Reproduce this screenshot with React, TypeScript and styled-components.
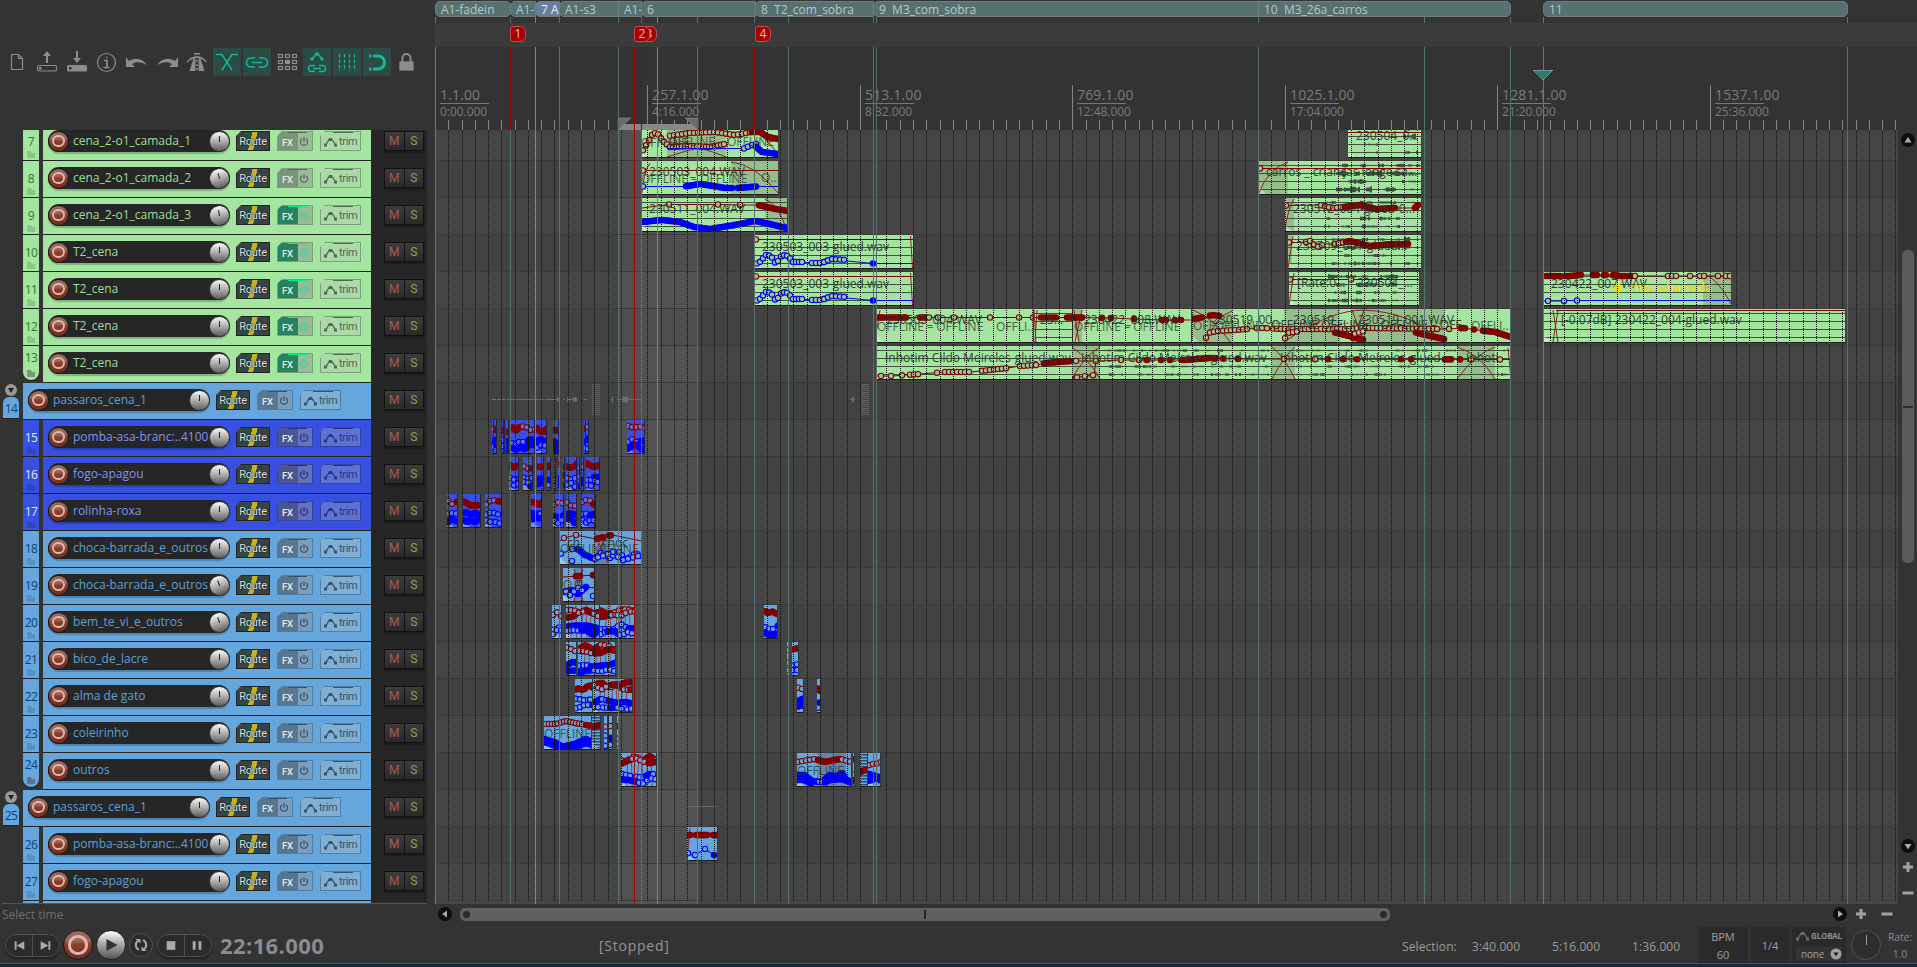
import React from 'react';
import styled, { createGlobalStyle } from 'styled-components';

const Global = createGlobalStyle`
  * { box-sizing: border-box; }
  html, body { margin: 0; padding: 0; background: #333; overflow: hidden; }
  body { font-family: "Open Sans", "Noto Sans", sans-serif; color: #999; }
  svg { display: block; }
`;

/* ---------- geometry ---------- */
const ORIGIN = 435;
const BEAT = 13.277;
const VIEW_W = 1463;
const ROW_H = 37;

/* ---------- palette ---------- */
type Tone = 'green' | 'sky' | 'blue';
const TONES: Record<Tone, { bg: string; name: string; num: string; fx: string; pw: string; trim: string; edge: string; ink: string; folder: string; fade: string; bead: string }> = {
  green: { bg: '#a4e5a0', name: '#9fdd9c', num: '#2f7a35', fx: '#7b957a', pw: '#9abb98', trim: '#abd9a9', edge: '#7aa37a', ink: '#4f6b50', folder: '#8cc489', fade: '#94bf8a', bead: '#a0c39b' },
  sky: { bg: '#65a7dc', name: '#5da0d6', num: '#103f74', fx: '#597690', pw: '#7b9ebc', trim: '#7fafd3', edge: '#4f7fa8', ink: '#35536f', folder: '#5590c0', fade: '#6385ab', bead: '#73a0cc' },
  blue: { bg: '#3750df', name: '#8095ef', num: '#e4e8ff', fx: '#4b5690', pw: '#6572bb', trim: '#5d73d4', edge: '#3443a4', ink: '#28348a', folder: '#2f44c4', fade: '#3d4b9e', bead: '#5a74e6' },
};

/* ---------- page frame ---------- */
const Screen = styled.div`
  width: 1917px; height: 967px; display: flex; flex-direction: column;
  background: #333; overflow: hidden;
`;
const Main = styled.div`display: flex; height: 904px;`;
const Side = styled.div`width: 435px; flex: none; display: flex; flex-direction: column;`;
const Timeline = styled.div`flex: 1; display: flex; flex-direction: column; position: relative;`;

/* ---------- toolbar ---------- */
const Toolbar = styled.div`height: 130px; padding: 48px 0 0 3px; display: flex; gap: 2px;`;
const Tool = styled.div<{ $on?: boolean }>`
  width: 28px; height: 28px;
  background: ${p => (p.$on ? '#2c4b45' : 'transparent')};
  color: ${p => (p.$on ? '#14b89a' : '#8a8e8d')};
  svg { width: 28px; height: 28px; }
`;

/* ---------- track panel ---------- */
const TrackList = styled.div`
  height: 773px; width: 427px; overflow: hidden; display: flex; flex-direction: column;
  background: linear-gradient(90deg, #333 371px, #262626 371px);
`;
const PanelEdge = styled.div`height: 1px; width: 425px; margin-left: 2px; background: #555;`;
const TrackRow = styled.div<{ $first?: boolean }>`
  height: ${ROW_H}px; flex: none; display: flex; margin-top: ${p => (p.$first ? '-6px' : '0')};
`;
const FolderCol = styled.div`width: 23px; flex: none; display: flex; flex-direction: column; align-items: center; padding-right: 1px; padding-top: 1px;`;
const FolderTab = styled.div`
  width: 16px; height: 22px; margin-top: 1px; background: #65a7dc; border-radius: 6px 6px 0 0;
  color: #103f74; font-size: 12px; line-height: 23px; text-align: center; border-bottom: 1px solid #222;
  letter-spacing: -0.6px;
`;
const NumCol = styled.div<{ $t: Tone; $last?: boolean }>`
  width: 16px; height: ${p => (p.$last ? 34 : 36)}px; flex: none; margin-right: 4px; background: ${p => TONES[p.$t].bg};
  color: ${p => TONES[p.$t].num}; display: flex; flex-direction: column; align-items: center;
  font-size: 12px; line-height: 16px; padding-top: ${p => (p.$last ? 4 : 10)}px; letter-spacing: -0.6px;
  border-radius: ${p => (p.$last ? '0 0 8px 8px' : '0')}; box-shadow: 0 1px 0 #222;
  svg { margin-top: ${p => (p.$last ? 4 : 1)}px; }
`;
const Body = styled.div<{ $t: Tone; $wide?: boolean }>`
  width: ${p => (p.$wide ? 348 : 328)}px; height: 36px; flex: none; background: ${p => TONES[p.$t].bg};
  box-shadow: 0 1px 0 #222; display: flex; align-items: center; padding: 0 0 2px 5px;
`;
const Pill = styled.div`
  width: 182px; height: 22px; border-radius: 11px; background: #262626; display: flex; align-items: center;
  box-shadow: 0 2px 1px rgba(0,0,0,.22);
`;
const Arm = styled.div<{ $d?: number }>`
  width: ${p => p.$d || 21}px; height: ${p => p.$d || 21}px; flex: none; border-radius: 50%; display: flex; align-items: center; justify-content: center;
  background: linear-gradient(#9c6658 0 35%, #8c3c29 50%, #6e2e20); border: 1px solid #171717;
  &::after { content: ''; width: 47%; height: 47%; border: ${p => (p.$d ? 3 : 2)}px solid #dcb9b0; border-radius: 50%; }
`;
const Name = styled.div<{ $t: Tone }>`
  width: 140px; padding-left: 4px; color: ${p => TONES[p.$t].name}; font-size: 12px; letter-spacing: 0;
  white-space: nowrap; overflow: hidden; line-height: 20px;
`;
const Knob = styled.div<{ $a: number }>`
  width: 21px; height: 21px; border-radius: 50%; flex: none; background: linear-gradient(#fafafa, #b5b5b5 45%, #5c5c5c);
  border: 1px solid #333; display: flex; justify-content: center; transform: rotate(${p => p.$a}deg);
  &::after { content: ''; width: 1px; height: 6px; margin-top: 4px; background: #222; }
`;
const RouteBtn = styled.div`
  width: 34px; height: 20px; margin-left: 6px; color: #ddd; font: 11px/20px Roboto, sans-serif; text-align: center; letter-spacing: -.2px;
  clip-path: polygon(5px 0, 100% 0, 100% 100%, 0 100%, 0 5px); border: 1px solid #222; white-space: nowrap;
  background: linear-gradient(104deg, #3b4240 26%, #235048 27% 38%, #3b4240 39% 42%, #c8b21e 43% 56%, #3b4240 57% 60%, #2c4358 61% 72%, #3b4240 73%);
  text-shadow: 0 0 2px #222, 0 0 1px #222;
`;
const FxBtn = styled.div<{ $t: Tone; $on?: boolean }>`
  width: 36px; height: 20px; margin-left: 7px; display: flex; clip-path: polygon(5px 0, 100% 0, 100% 100%, 0 100%, 0 5px);
  background: linear-gradient(90deg, ${p => (p.$on ? '#25845f' : TONES[p.$t].fx)} 20px, ${p => TONES[p.$t].pw} 20px);
  border: 1px solid ${p => TONES[p.$t].edge}; color: #e6eae6; font: 500 9.5px/21px Roboto, sans-serif; position: relative;
  span { width: 19px; flex: none; text-align: center; }
  svg { margin: 4px 0 0 1px; flex: none; }
  &::before { content: ''; position: absolute; left: 10px; top: 0; width: 19px; height: 1px; background: ${p => (p.$on ? '#00f090' : TONES[p.$t].ink)}; }
`;
const TrimBtn = styled.div<{ $t: Tone }>`
  width: 41px; height: 20px; margin-left: 7px; display: flex; align-items: center; clip-path: polygon(5px 0, 100% 0, 100% 100%, 0 100%, 0 5px);
  background: ${p => TONES[p.$t].trim}; border: 1px solid ${p => TONES[p.$t].edge}; color: ${p => TONES[p.$t].ink};
  font: 11px/20px Roboto, sans-serif; letter-spacing: -.35px; position: relative; padding: 1px 0 0 3px; gap: 2px;
  svg { flex: none; }
  &::before { content: ''; position: absolute; left: 12px; top: 0; width: 20px; height: 1px; background: ${p => TONES[p.$t].ink}; }
`;
const MuteSolo = styled.div`
  width: 40px; height: 20px; margin: 7px 0 0 13px; display: flex; background: linear-gradient(#3c3c3c, #2a2a2a);
  border: 1px solid #111; box-shadow: 0 2px 1px #1b1b1b; font: 12px/18px Roboto, sans-serif;
  span { flex: 1; text-align: center; }
  span:first-child { color: #a85a54; border-right: 1px solid #111; }
  span:last-child { color: #9b9b52; }
`;

const Power = ({ c }: { c: string }) => (
  <svg width="12" height="12" viewBox="0 0 12 12" fill="none" stroke={c} strokeWidth="1.2"><path d="M4 2.8a3.6 3.6 0 1 0 4 0M6 1v5" /></svg>
);
const EnvIcon = ({ c }: { c: string }) => (
  <svg width="13" height="10" viewBox="0 0 13 10" fill={c} stroke={c}><path d="M2 8 L5 2.500 8 2.500 11 7" fill="none" strokeWidth="1.3" /><path d="M0 6.500h3v3H0zM5 1h3v3H5zM10 6.500h3v3h-3z" stroke="none" /></svg>
);
const Folder = ({ c }: { c: string }) => (
  <svg width="8" height="7" viewBox="0 0 8 7" fill={c}><path d="M0 0h4l1 2h3v5H0z" /></svg>
);

type Track = { n: number; name: string; tone: Tone; on?: boolean; parent?: boolean; last?: boolean; knob?: number };
const TRACKS: Track[] = [
  { n: 7, name: 'cena_2-o1_camada_1', tone: 'green' },
  { n: 8, name: 'cena_2-o1_camada_2', tone: 'green', knob: -16 },
  { n: 9, name: 'cena_2-o1_camada_3', tone: 'green', on: true, knob: -12 },
  { n: 10, name: 'T2_cena', tone: 'green', on: true },
  { n: 11, name: 'T2_cena', tone: 'green', on: true },
  { n: 12, name: 'T2_cena', tone: 'green', on: true },
  { n: 13, name: 'T2_cena', tone: 'green', on: true, last: true },
  { n: 14, name: 'passaros_cena_1', tone: 'sky', parent: true },
  { n: 15, name: 'pomba-asa-branc:..4100', tone: 'blue' },
  { n: 16, name: 'fogo-apagou', tone: 'blue' },
  { n: 17, name: 'rolinha-roxa', tone: 'blue' },
  { n: 18, name: 'choca-barrada_e_outros', tone: 'sky' },
  { n: 19, name: 'choca-barrada_e_outros', tone: 'sky', knob: -20 },
  { n: 20, name: 'bem_te_vi_e_outros', tone: 'sky', knob: -20 },
  { n: 21, name: 'bico_de_lacre', tone: 'sky' },
  { n: 22, name: 'alma de gato', tone: 'sky' },
  { n: 23, name: 'coleirinho', tone: 'sky' },
  { n: 24, name: 'outros', tone: 'sky', last: true },
  { n: 25, name: 'passaros_cena_1', tone: 'sky', parent: true },
  { n: 26, name: 'pomba-asa-branc:..4100', tone: 'sky' },
  { n: 27, name: 'fogo-apagou', tone: 'sky' },
];

function TrackPanel({ t, first }: { t: Track; first: boolean }) {
  const c = TONES[t.tone];
  return (
    <TrackRow $first={first}>
      <FolderCol>
        {t.parent && (
          <>
            <svg width="12" height="12" viewBox="0 0 12 12"><circle cx="6" cy="6" r="6" fill="#999" /><path d="M3 4h6L6 9z" fill="#222" /></svg>
            <FolderTab>{t.n}</FolderTab>
          </>
        )}
      </FolderCol>
      {!t.parent && <NumCol $t={t.tone} $last={t.last}>{t.n}<Folder c={t.last ? c.fx : c.folder} /></NumCol>}
      <Body $t={t.tone} $wide={t.parent}>
        <Pill><Arm /><Name $t={t.tone}>{t.name}</Name><Knob $a={t.knob || 0} /></Pill>
        <RouteBtn>Route</RouteBtn>
        <FxBtn $t={t.tone} $on={t.on}><span>FX</span><Power c={t.on ? '#35d59a' : c.ink} /></FxBtn>
        <TrimBtn $t={t.tone}><EnvIcon c={c.ink} />trim</TrimBtn>
      </Body>
      <MuteSolo><span>M</span><span>S</span></MuteSolo>
    </TrackRow>
  );
}

/* ---------- ruler ---------- */
const RegionLane = styled.div`height: 23px; position: relative;`;
const Region = styled.div<{ $blue?: boolean; $l?: boolean; $r?: boolean }>`
  position: absolute; top: 1px; height: 16px; background: ${p => (p.$blue ? '#66809e' : '#577070')};
  border: 1px solid #6f7d7d; border-radius: ${p => `${p.$l ? 5 : 0}px ${p.$r ? 5 : 0}px ${p.$r ? 5 : 0}px ${p.$l ? 5 : 0}px`};
  color: ${p => (p.$blue ? '#e6eef4' : '#b7c8c8')}; font-size: 12px; line-height: 16px; padding-left: 5px; letter-spacing: 0;
  white-space: pre; overflow: hidden;
`;
const MarkerLane = styled.div`height: 24px; position: relative; background: #3b3b3b; z-index: 2;`;
const Marker = styled.div`
  position: absolute; top: 3px; width: 16px; height: 16px; border-radius: 3px 6px 6px 3px; background: #a80000; border: 1px solid #c05050;
  color: #f0b8b8; font-size: 12px; line-height: 14px; text-align: center;
`;
const TimeLane = styled.div`height: 83px; position: relative;`;
const TimeLabel = styled.div`
  position: absolute; top: 38px; color: #7b7b7b; white-space: nowrap;
  b { display: block; font-weight: 400; font-size: 14px; line-height: 20px; height: 18px; letter-spacing: .15px; }
  i { display: block; font-style: normal; font-size: 12px; line-height: 16px; border-top: 1px solid #777; width: 49px; letter-spacing: -.05px; }
`;
const RulerTicks = styled.svg`position: absolute; left: 0; top: 0;`;

const REGIONS = [
  { x: 435, e: 511, t: 'A1-fadein', l: true, r: true },
  { x: 510, e: 536, t: 'A1-s2', l: true },
  { x: 535, e: 560, t: '7 A1', b: true, l: true },
  { x: 559, e: 619, t: 'A1-s3', l: true },
  { x: 618, e: 642, t: 'A1-s' },
  { x: 641, e: 756, t: '6', l: true },
  { x: 755, e: 874, t: '8  T2_com_sobra', l: true },
  { x: 873, e: 1259, t: '9  M3_com_sobra', l: true },
  { x: 1258, e: 1511, t: '10  M3_26a_carros', r: true },
  { x: 1543, e: 1848, t: '11', l: true, r: true },
];
const LABELS = [['1.1.00', '0:00.000'], ['257.1.00', '4:16.000'], ['513.1.00', '8:32.000'], ['769.1.00', '12:48.000'], ['1025.1.00', '17:04.000'], ['1281.1.00', '21:20.000'], ['1537.1.00', '25:36.000']];
const tick = (i: number) => Math.round(BEAT * i);

function Ruler() {
  return (
    <>
      <RegionLane>
        {REGIONS.map(r => (
          <Region key={r.x} $blue={r.b} $l={r.l} $r={r.r} style={{ left: r.x - ORIGIN, width: r.e - r.x }}>{r.t}</Region>
        ))}
      </RegionLane>
      <MarkerLane>
        {[[641, 3], [634, 2], [510, 1], [755, 4]].map(([x, n]) => <Marker key={n} style={{ left: x - ORIGIN }}>{n}</Marker>)}
      </MarkerLane>
      <TimeLane>
        <RulerTicks width="1482" height="83">
          {Array.from({ length: 110 }, (_, i) => i + 1).map(i => (
            <rect key={i} x={tick(i)} y={i % 16 ? 73 : 38} width="1" height={i % 16 ? 10 : 45} fill="#868686" />
          ))}
          <rect x="183" y="77" width="80" height="6" fill="#868a87" />
          <path d="M183 71h13l-13 12zM263 71h-13l13 12z" fill="#6c6c6c" stroke="#8a8a8a" strokeWidth=".6" />
        </RulerTicks>
        {LABELS.map(([a, b], i) => <TimeLabel key={a} style={{ left: tick(i * 16) + 5 }}><b>{a}</b><i>{b}</i></TimeLabel>)}
      </TimeLane>
    </>
  );
}

/* ---------- media items ---------- */
type P = [number, number];
type Run = [number, number, number, 0 | 1]; // from, to, step, filled
type Env = { c: 'r' | 'b'; pts: P[]; runs?: Run[]; noLine?: boolean };
type Item = {
  x: number; e: number; tone?: Tone; lines?: boolean; text?: [number, number, string][];
  env?: Env[]; fade?: [number, number][]; curves?: string[]; wave?: [number, number, number][]; auto?: number; hatch?: boolean;
};
const RED = '#820000';
const BLUE = '#0000fa';

const yAt = (pts: P[], x: number) => {
  for (let i = 1; i < pts.length; i++) {
    if (x <= pts[i][0]) {
      const [a, b] = [pts[i - 1], pts[i]];
      return a[1] + ((b[1] - a[1]) * (x - a[0])) / (b[0] - a[0] || 1);
    }
  }
  return pts[pts.length - 1][1];
};
const rnd = (s: number) => {
  const v = Math.sin(s * 127.1 + 311.7) * 43758.5453;
  return v - Math.floor(v);
};

const Clip = styled.div<{ $bg: string }>`
  position: absolute; top: 0; height: 34px; background: ${p => p.$bg}; overflow: hidden;
  border-bottom: 1px solid #1d1d1d; border-right: 1px solid rgba(20, 20, 20, .75);
`;

function Envelope({ env, bead }: { env: Env; bead: string }) {
  const col = env.c === 'r' ? RED : BLUE;
  const dots: React.ReactNode[] = [];
  (env.runs || []).forEach(([a, b, s, f], k) => {
    for (let x = a; x <= b; x += s) dots.push(<circle key={`${k}-${x}`} cx={x} cy={yAt(env.pts, x)} r={f ? 3.3 : 2.7} fill={f ? col : bead} stroke={col} strokeWidth={f ? 0 : 1.1} />);
  });
  return (
    <g>
      {!env.noLine && <polyline points={env.pts.map(p => p.join(',')).join(' ')} fill="none" stroke={col} strokeWidth="1" />}
      {dots}
    </g>
  );
}

/* Dense volume and pan envelopes of the short bird-song items. */
function autoEnv(it: Item): Env[] {
  const w = it.e - it.x;
  const seed = it.x + (it.auto || 0) * 3.7;
  const make = (c: 'r' | 'b', mid: number, amp: number, k: number): Env => {
    const pts: P[] = [];
    const step = Math.max(4, Math.min(9, w / 5));
    let i = 0;
    for (let x = it.x; x <= it.e + step; x += step) pts.push([x, mid + (rnd(seed + k + i++) - 0.5) * amp]);
    const runs: Run[] = [];
    let x = it.x + 1;
    while (x < it.e) {
      const len = 4 + rnd(seed + x + k) * 12;
      const filled = rnd(seed + x * 2 + k) > 0.42;
      runs.push([x, Math.min(x + len, it.e), filled ? 2 : 4, filled ? 1 : 0]);
      x += len + 2;
    }
    return { c, pts, runs };
  };
  if (it.tone === 'blue') return [make('r', 9, 7, 1), make('b', 21, 6, 20), make('b', 27, 7, 40)];
  const bands = [make('r', 9, 8, 1), make('b', 22, 6, 20), make('b', 28, 6, 40)];
  return w > 30 ? [make('r', 6, 7, 60), ...bands] : bands;
}

function ClipView({ it }: { it: Item }) {
  const tone = it.tone || 'green';
  const w = it.e - it.x;
  const c = TONES[tone];
  const envs = it.auto !== undefined ? autoEnv(it) : it.env || [];
  return (
    <Clip $bg={c.bg} style={{ left: it.x - ORIGIN, width: w }}>
      <svg width={w} height="33" viewBox={`${it.x} 0 ${w} 33`}>
        {(it.fade || []).map(([a, b]) => <rect key={a} x={a} y="0" width={b - a} height="33" fill={c.fade} />)}
        {it.lines && [4, 12, 20, 28].map(y => <rect key={y} x={it.x} y={y} width={w} height="1" fill="#3f5240" />)}
        {it.hatch && Array.from({ length: 11 }, (_, i) => <rect key={i} x={it.x} y={i * 3 + 1} width={w} height="1.500" fill="#284d70" />)}
        {(it.wave || []).map(([a, b, amp], k) => (
          <g key={k} fill="#3c4f3d">
            {[4.5, 12.5, 20.5, 28.5].map((y, j) => Array.from({ length: Math.floor((b - a) / 2) }, (_, i) => {
              const v = rnd(Math.floor(i / 3) + j * 91 + a);
              if (v < 0.35) return null;
              const h = (1 + rnd(i + j * 17 + a) * v * 3) * amp;
              return <rect key={`${j}-${i}`} x={a + i * 2} y={y - h} width="2" height={h * 2} />;
            }))}
          </g>
        ))}
        <path d={`M${it.x} 26v7h7z`} fill="#fff" opacity={w > 8 ? 0.35 : 0} />
        {(it.curves || []).map(d => <path key={d} d={d} fill="none" stroke="#8a2020" strokeWidth="1" />)}
        {it.auto !== undefined && w > 30 && [0.2, 0.5, 0.75].map(f => (
          <path key={f} d={`M${it.x + w * f} 2l-2 31M${it.x + w * f + 3} 0l1 33`} stroke="#8a2020" opacity=".7" />
        ))}
        {envs.map((e, i) => <Envelope key={i} env={e} bead={c.bead} />)}
        {(it.text || []).map(([x, y, s], i) => (
          <text key={i} x={x} y={y} fontSize="12" fill="#263a28" opacity={s.startsWith('O') ? 0.75 : 0.95} xmlSpace="preserve">{s}</text>
        ))}
      </svg>
    </Clip>
  );
}

const glued = (): Item => ({
  x: 755, e: 914, lines: true, text: [[762, 16, '230503_003-glued.wav']], curves: ['M910.500 1L912.500 33'],
  env: [
    { c: 'r', pts: [[755, 4.5], [914, 4.5]], runs: [[756, 756, 1, 0]] },
    { c: 'b', pts: [[755, 29], [759, 28], [766, 20], [771, 21], [776, 29], [782, 20], [788, 21], [793, 27], [802, 27], [812, 28], [822, 28], [831, 24], [846, 25], [847, 26], [873, 28.5], [914, 28.5]], runs: [[757, 802, 3, 0], [812, 824, 4, 0], [824, 846, 4, 0], [873, 873, 1, 1]] },
  ],
});

const small = (tone: Tone, list: number[][]): Item[] => list.map(([x, e], i) => ({ x, e, tone, auto: i }));

const LANES: Record<number, Item[]> = {
  7: [
    {
      x: 642, e: 779, fade: [[667, 726]], text: [[641, 23, 'OFFLINE'], [668, 22, 'OFFLINE'], [727, 22, 'OFFLINE']],
      curves: ['M667 33Q700 22 726 18', 'M667 18Q700 22 726 33', 'M757 8Q770 18 778 30'],
      env: [
        { c: 'r', pts: [[642, 28], [648, 18], [653, 9], [657, 9], [663, 17], [670, 23], [690, 22], [710, 23], [725, 20]], runs: [[643, 725, 3, 0]] },
        { c: 'r', pts: [[668, 12], [690, 9], [715, 8], [735, 11], [752, 8]], runs: [[670, 752, 4, 0]] },
        { c: 'r', pts: [[752, 8], [760, 8], [768, 13], [778, 15]], runs: [[752, 778, 2, 1]] },
        { c: 'b', pts: [[667, 24.5], [744, 24.5], [754, 20]], runs: [[744, 756, 4, 0]] },
        { c: 'b', pts: [[755, 22], [762, 28], [778, 30]], runs: [[756, 778, 2, 1]] },
      ],
    },
    { x: 1348, e: 1422, lines: true, text: [[1356, 16, '230504_0...']], env: [{ c: 'r', pts: [[1348, 8.5], [1422, 8.5]] }], wave: [[1364, 1380, .4], [1404, 1419, .8]] },
  ],
  8: [
    {
      x: 642, e: 779, fade: [[731, 779]], text: [[649, 15, '230503_004.WAV'], [641, 22, 'OFFLINE – OFFLINE'], [761, 21, 'O...']],
      curves: ['M731 1Q755 3 778 32', 'M642 32Q644 10 650 2'],
      env: [
        { c: 'r', pts: [[642, 9.500], [779, 9.500]], runs: [[643, 643, 1, 0]] },
        { c: 'b', pts: [[642, 25.5], [685, 25.5], [700, 23], [713, 25], [725, 27], [737, 27], [757, 25.5], [779, 25.5]], runs: [[643, 643, 1, 0], [686, 732, 2, 1], [738, 756, 2, 1]] },
      ],
    },
    { x: 1259, e: 1422, lines: true, fade: [[1259, 1288]], curves: ['M1259 32Q1268 8 1288 1'], text: [[1266, 15, 'carros _ crianças longe sa...']], env: [{ c: 'r', pts: [[1259, 7.500], [1422, 7.500]], runs: [[1260, 1260, 1, 0]] }], wave: [[1336, 1404, .85], [1408, 1420, .4]] },
  ],
  9: [
    {
      x: 642, e: 788, lines: true, fade: [[765, 788]], text: [[649, 15, '230511_004.WAV']], curves: ['M765 1Q778 6 786 30'],
      env: [
        { c: 'r', pts: [[642, 10], [669, 6.5], [718, 6.5], [740, 7], [760, 7]], runs: [[669, 669, 1, 0], [718, 718, 1, 0], [740, 740, 1, 0]] },
        { c: 'r', pts: [[758, 7], [775, 11], [788, 13]], runs: [[759, 788, 2, 1]] },
        { c: 'b', pts: [[642, 24], [662, 22], [680, 24], [694, 29], [710, 31], [735, 27], [755, 23], [770, 26], [782, 29], [788, 30]], runs: [[642, 788, 2, 1]] },
      ],
    },
    {
      x: 1285, e: 1422, lines: true, text: [[1293, 15, '230512_004-glued-0...']], fade: [[1285, 1294]], curves: ['M1285 32Q1288 10 1294 1'],
      env: [{ c: 'r', pts: [[1285, 7.500], [1320, 7], [1332, 10], [1344, 9], [1360, 7], [1376, 11], [1395, 10], [1415, 10], [1418, 7]], runs: [[1286, 1286, 1, 0], [1321, 1342, 4, 0], [1345, 1396, 2, 1], [1415, 1418, 1, 1]] }],
      wave: [[1324, 1350, .4], [1360, 1400, .5], [1405, 1421, .3]],
    },
  ],
  10: [glued(), {
    x: 1288, e: 1422, lines: true, text: [[1296, 15, '230509_001-glued...']], fade: [[1288, 1292]], curves: ['M1288 33L1293 1'],
    env: [{ c: 'r', pts: [[1288, 7.500], [1305, 7.500], [1309, 5], [1317, 12], [1325, 9], [1336, 9], [1350, 6], [1370, 11], [1394, 9], [1410, 9]], runs: [[1289, 1289, 1, 0], [1306, 1324, 4, 0], [1335, 1344, 4, 0], [1346, 1394, 2, 1], [1399, 1410, 3, 1]] }],
    wave: [[1332, 1400, .5], [1404, 1411, .8]],
  }],
  11: [glued(), {
    x: 1289, e: 1349, lines: true, text: [[1297, 15, '[Rate:0...']], curves: ['M1289 33L1294 1'], env: [{ c: 'r', pts: [[1289, 7.500], [1349, 7.500]], runs: [[1290, 1290, 1, 0]] }], wave: [[1328, 1349, .6]],
  }, {
    x: 1349, e: 1420, lines: true, text: [[1357, 15, '230504_...']], env: [{ c: 'r', pts: [[1349, 7.500], [1420, 7.500]], runs: [[1351, 1351, 1, 0]] }], wave: [[1350, 1398, .6]],
  }, {
    x: 1544, e: 1732, lines: true, fade: [[1703, 1732]], text: [[1551, 16, '230422_007.WAV']], curves: ['M1703 2Q1718 6 1731 32'],
    env: [
      { c: 'r', pts: [[1544, 4], [1570, 4], [1580, 3], [1612, 3], [1620, 4], [1732, 4]], runs: [[1546, 1560, 2, 1], [1565, 1581, 2, 1], [1593, 1598, 2, 1], [1604, 1606, 1, 1], [1613, 1631, 2, 1], [1635, 1635, 1, 0], [1668, 1676, 4, 0], [1690, 1690, 1, 0], [1700, 1704, 4, 0], [1718, 1718, 1, 0], [1726, 1730, 4, 0]] },
      { c: 'b', pts: [[1544, 29], [1564, 29], [1566, 28.5], [1732, 28.5]], runs: [[1548, 1548, 1, 0], [1564, 1564, 1, 0], [1577, 1577, 1, 0]] },
    ],
  }],
  12: [{
    x: 877, e: 1034, text: [[886, 15, '230503_004.WAV'], [877, 22, 'OFFLINE – OFFLINE'], [996, 22, 'OFFLI...']],
    env: [{ c: 'r', pts: [[877, 8.500], [1034, 8.500]], runs: [[878, 885, 2, 1], [888, 906, 2, 1], [920, 926, 2, 1], [929, 929, 1, 0], [938, 938, 1, 0], [954, 954, 1, 0], [990, 990, 1, 0], [1019, 1019, 1, 0], [1033, 1033, 1, 0]] }],
    curves: ['M877 20L880 1'],
  }, {
    x: 1034, e: 1073, lines: true, text: [[1040, 15, '23...']], env: [{ c: 'r', pts: [[1034, 8.500], [1073, 8.500]], runs: [[1041, 1058, 3, 1], [1067, 1073, 2, 1]] }], curves: ['M1034 1L1036 33M1037 1L1035 33'],
  }, {
    x: 1073, e: 1192, fade: [[1073, 1082]], text: [[1084, 15, '230422_008.WAV'], [1074, 22, 'OFFLINE – OFFLINE']],
    env: [{ c: 'r', pts: [[1073, 8.500], [1111, 9], [1134, 10], [1163, 11], [1192, 11]], runs: [[1074, 1082, 2, 1], [1102, 1102, 1, 1], [1111, 1111, 1, 1], [1134, 1134, 1, 1], [1162, 1166, 2, 1], [1175, 1175, 1, 1], [1181, 1181, 1, 1]] }],
    curves: ['M1074 1L1079 33M1082 1L1075 33'],
  }, {
    x: 1192, e: 1511, fade: [[1192, 1232], [1284, 1340], [1352, 1444]],
    text: [[1212, 15, '230519_00...'], [1293, 15, '230519_...'], [1358, 15, '230519_001.WAV'], [1193, 21, 'OFFOFFLINE'], [1262, 20, '– OFFLINE OFFLINE – OFFLINE – OFF'], [1471, 21, 'OFFLI...']],
    curves: ['M1193 1Q1215 10 1230 33', 'M1206 33Q1215 8 1232 2', 'M1284 33Q1330 1 1364 1Q1410 3 1444 32', 'M1352 1L1364 33M1364 1L1352 33'],
    env: [
      { c: 'r', pts: [[1192, 10], [1206, 8], [1212, 6], [1220, 7]], runs: [[1193, 1204, 3, 1], [1210, 1220, 3, 1]] },
      { c: 'r', pts: [[1205, 31], [1208, 24], [1217, 22], [1235, 21], [1260, 19], [1284, 20], [1350, 20], [1364, 19], [1440, 20], [1449, 20], [1463, 19], [1477, 21], [1495, 23], [1511, 28]], runs: [[1206, 1218, 4, 0], [1223, 1248, 4, 0], [1257, 1268, 5, 0], [1273, 1440, 4, 0], [1449, 1449, 1, 0], [1461, 1466, 2, 1], [1474, 1474, 1, 1], [1483, 1511, 2, 1]] },
      { c: 'r', pts: [[1333, 23], [1345, 26], [1364, 31]], runs: [[1335, 1364, 2, 1]], noLine: true },
      { c: 'r', pts: [[1414, 23], [1430, 27], [1444, 30]], runs: [[1416, 1444, 2, 1]], noLine: true },
      { c: 'r', pts: [[1284, 31], [1288, 24], [1300, 22], [1354, 25], [1364, 22]], runs: [[1285, 1297, 4, 0], [1355, 1364, 4, 0]], noLine: true },
    ],
  }, {
    x: 1544, e: 1846, lines: true, text: [[1561, 15, '[-0.07dB] 230422_004-glued.wav']], curves: ['M1553 1L1558 33M1558 1L1553 33'],
    env: [{ c: 'r', pts: [[1556, 1.500], [1846, 1.500]] }],
  }],
  13: [{
    x: 877, e: 1511, lines: true, fade: [[1072, 1100], [1272, 1295], [1457, 1495]],
    text: [[885, 16, 'Inhotim Cildo Meireles-glued.wav'], [1081, 16, 'Inhotim Cildo Meireles-glued.wav'], [1280, 16, 'Inhotim Cildo Meireles-glued'], [1466, 16, 'Inhoti']],
    curves: ['M1072 1Q1088 12 1100 33', 'M1072 33Q1084 10 1100 1', 'M1272 1Q1284 10 1295 33', 'M1272 33Q1284 10 1295 1', 'M1457 1Q1480 8 1495 33', 'M1457 33Q1475 8 1495 1', 'M1508 2L1511 33'],
    wave: [[1103, 1270, .38], [1296, 1456, .38], [1497, 1509, .4]],
    env: [
      { c: 'r', pts: [[877, 30], [892, 30], [920, 28], [945, 26], [971, 26], [990, 24], [1008, 22], [1020, 20], [1036, 19], [1046, 17], [1072, 15], [1100, 15], [1120, 14], [1185, 14], [1210, 12], [1240, 13], [1511, 13.500]], runs: [[881, 891, 10, 0], [902, 902, 1, 0], [910, 920, 4, 0], [937, 937, 1, 0], [945, 971, 4, 0], [982, 1008, 4, 0], [1020, 1038, 4, 0], [1044, 1070, 2, 1], [1076, 1076, 1, 0], [1096, 1096, 1, 0], [1121, 1121, 1, 0], [1139, 1139, 1, 0], [1147, 1147, 1, 1], [1161, 1170, 9, 1], [1182, 1216, 2, 1], [1223, 1223, 1, 1], [1238, 1238, 1, 1], [1284, 1284, 1, 0], [1315, 1315, 1, 0], [1328, 1328, 1, 1], [1343, 1343, 1, 1], [1357, 1357, 1, 1], [1401, 1401, 1, 1], [1411, 1411, 1, 1], [1445, 1451, 3, 1], [1460, 1460, 1, 1], [1471, 1471, 1, 0], [1500, 1500, 1, 0]] },
      { c: 'r', pts: [[1072, 32], [1094, 29], [1096, 15]], runs: [[1077, 1095, 8, 0]] },
    ],
  }],
  15: small('blue', [[492, 494], [494, 497], [502, 504], [504, 505], [506, 509], [511, 535], [536, 547], [553, 559], [584, 586], [586, 589], [627, 645]]),
  16: small('blue', [[509, 519], [523, 533], [537, 544], [547, 551], [554, 556], [558, 560], [563, 565], [566, 577], [578, 580], [581, 584], [586, 600]]),
  17: small('blue', [[447, 458], [463, 481], [485, 502], [531, 542], [553, 564], [566, 577], [581, 596]]),
  18: [{
    x: 560, e: 642, tone: 'sky', fade: [[594, 608]], text: [[567, 16, 'ch'], [602, 16, 'choc'], [560, 22, 'OFFLINEFLINE']],
    curves: ['M594 1L608 32', 'M594 32L608 1'],
    env: [
      { c: 'r', pts: [[560, 10], [564, 7], [576, 4], [596, 8], [612, 4], [642, 10]], runs: [[564, 564, 1, 0], [576, 576, 1, 0], [597, 603, 2, 1], [609, 612, 2, 1]] },
      { c: 'b', pts: [[560, 23], [572, 18], [578, 18], [585, 24], [595, 28], [602, 21], [610, 27], [618, 20], [626, 29], [636, 22], [642, 26]], runs: [[561, 573, 11, 0], [577, 594, 2, 1], [595, 640, 3, 0]] },
      { c: 'b', pts: [[572, 30], [600, 26], [615, 20], [620, 30], [642, 24]], runs: [[572, 572, 1, 0], [598, 642, 5, 0]], noLine: true },
    ],
  }],
  19: [{
    x: 563, e: 595, tone: 'sky', fade: [[574, 583]], text: [[563, 21, 'O'], [574, 21, 'O']], curves: ['M574 33L583 1', 'M574 1L583 33'],
    env: [{ c: 'r', pts: [[563, 9], [595, 7]], runs: [[576, 581, 2, 1], [593, 594, 1, 1]] }, { c: 'b', pts: [[563, 24], [572, 22], [578, 26], [586, 19], [595, 20]], runs: [[564, 586, 2, 1]] }, { c: 'b', pts: [[563, 21], [570, 27], [578, 20], [592, 28]], runs: [[566, 582, 4, 0], [593, 593, 1, 0]], noLine: true }],
  }],
  20: small('sky', [[552, 562], [566, 600], [600, 635], [764, 778]]),
  21: small('sky', [[566, 577], [578, 616], [787, 789], [792, 799]]),
  22: small('sky', [[575, 593], [593, 633], [797, 804], [817, 821]]),
  23: [{
    x: 544, e: 592, tone: 'sky', text: [[544, 22, 'OFFLINE']],
    env: [{ c: 'r', pts: [[544, 8], [556, 8], [566, 5], [575, 7], [592, 10]], runs: [[546, 582, 3, 0], [586, 592, 2, 1]] }, { c: 'b', pts: [[544, 23], [556, 27], [562, 31], [575, 28], [586, 23], [592, 26]], runs: [[544, 592, 1, 1]] }, { c: 'b', pts: [[544, 26], [556, 30], [562, 32], [575, 31], [586, 27], [592, 29]], runs: [[544, 592, 2, 1]] }],
  }, { x: 592, e: 601, tone: 'sky', hatch: true, env: [{ c: 'r', pts: [[592, 11], [601, 9]], runs: [[592, 600, 1, 1]] }] },
    ...small('sky', [[604, 608], [609, 613], [617, 619]])],
  24: [...small('sky', [[621, 657]]), {
    x: 797, e: 852, tone: 'sky', fade: [[817, 846]], text: [[797, 22, 'OFFLINE']],
    env: [
      { c: 'r', pts: [[797, 9], [815, 6], [825, 9], [840, 6], [852, 9]], runs: [[798, 815, 4, 0], [818, 841, 2, 1], [842, 851, 4, 0]] },
      { c: 'b', pts: [[797, 22], [804, 22], [812, 28], [822, 29], [830, 22], [836, 24], [842, 20], [846, 27], [852, 29]], runs: [[797, 818, 1, 1], [819, 824, 3, 0], [825, 852, 1, 1]] },
      { c: 'b', pts: [[797, 27], [804, 27], [812, 31], [822, 31], [830, 27], [842, 26], [852, 30]], runs: [[797, 812, 2, 1], [825, 852, 2, 1]], noLine: true },
    ],
  }, ...small('sky', [[853, 855]]), { x: 860, e: 868, tone: 'sky', hatch: true, env: [{ c: 'r', pts: [[860, 19], [868, 16]], runs: [[860, 866, 2, 1]] }] }, ...small('sky', [[868, 881]])],
  26: [{
    x: 687, e: 718, tone: 'sky', curves: ['M687 33L690 1'],
    env: [{ c: 'r', pts: [[687, 8], [718, 8]], runs: [[688, 690, 1, 1], [696, 707, 1, 1], [713, 717, 1, 1]] }, { c: 'b', pts: [[687, 26], [695, 28], [705, 22], [714, 28], [718, 28]], runs: [[688, 688, 1, 0], [695, 695, 1, 0], [705, 705, 1, 0], [714, 714, 1, 1]] }],
  }],
};

const Arrange = styled.div`
  height: 774px; width: ${VIEW_W}px; overflow: hidden; position: relative; display: flex; flex-direction: column;
  background: linear-gradient(90deg, #454545 183px, #525252 183px 263px, #454545 263px);
`;
const Lane = styled.div<{ $first?: boolean; $alt?: boolean }>`
  height: ${ROW_H}px; flex: none; position: relative; border-bottom: 1px solid #3b3b3b; margin-top: ${p => (p.$first ? '-6px' : '0')};
  background: ${p => (p.$alt ? 'rgba(0,0,0,.04)' : 'transparent')};
`;
const Ghost = styled.svg`position: absolute; left: 0; top: 0;`;
const Overlay = styled.svg`position: absolute; left: 0; top: 0; pointer-events: none; z-index: 1;`;
const TakeMarker = styled.div`
  position: absolute; left: 1178px; top: 8px; display: flex; align-items: center; gap: 5px; color: #ecdc10; font-size: 12px; font-weight: 600; line-height: 16px;
`;

const EDGES: [number, string][] = [[435, '#5f7f7f'], [510, '#56716f'], [535, '#6d879c'], [559, '#56716f'], [618, '#56716f'], [641, '#56716f'], [657, '#6d879c'], [697, '#56716f'], [754, '#56716f'], [788, '#56716f'], [873, '#56716f'], [876, '#56716f'], [1258, '#56716f'], [1424, '#56716f'], [1510, '#56716f'], [1847, '#56716f']];

function ParentGhost({ n }: { n: number }) {
  if (n === 25) return <Ghost width="1463" height="36"><rect x="253" y="16" width="29" height="1" fill="#6c6c6c" /></Ghost>;
  const segs = [[57, 4], [62, 4], [67, 3], [72, 7], [80, 24], [105, 4], [110, 9], [118, 5], [128, 2], [132, 10], [149, 3], [176, 2], [182, 25], [415, 5]];
  return (
    <Ghost width="1463" height="36">
      {segs.map(([x, w]) => <rect key={x} x={x} y="16" width={w} height="1" fill="#6e6e6e" />)}
      {[[80, 1, 3], [122, 2, 3], [132, 3, 3], [138, 4, 3], [177, 1, 5], [187, 6, 4], [192, 1, 5], [417, 2, 4]].map(([x, w, h]) => <rect key={x} x={x} y={16.5 - h / 1.5} width={w} height={h * 1.33} fill="#6e6e6e" />)}
      {[157, 426].map(x => Array.from({ length: 16 }, (_, i) => <rect key={`${x}-${i}`} x={x} y={1 + i * 2} width="8" height="1" fill="#626262" />))}
    </Ghost>
  );
}

/* ---------- scrollbars ---------- */
const VScroll = styled.div`
  width: 19px; height: 774px; display: flex; flex-direction: column; align-items: center; padding-top: 3px;
`;
const VThumb = styled.div`
  width: 12px; height: 313px; margin-top: 103px; border-radius: 5px; background: #5b5b5b; display: flex; align-items: center; justify-content: center;
  &::after { content: ''; width: 10px; height: 2px; background: #2c2c2c; }
`;
const Gap = styled.div<{ $h?: number; $w?: number }>`height: ${p => p.$h || 0}px; width: ${p => p.$w || 0}px; flex: none;`;
const ArrangeRow = styled.div`display: flex;`;
const StatusRow = styled.div`height: 23px; display: flex;`;
const Status = styled.div`width: 438px; padding-left: 2px; font-size: 12px; line-height: 22px; color: #6c6c6c;`;
const HScroll = styled.div`flex: 1; display: flex; align-items: center; padding-bottom: 3px;`;
const HThumb = styled.div`
  width: 930px; height: 13px; margin: 0 443px 0 8px; border-radius: 5px; background: #606060; display: flex; align-items: center; justify-content: space-between; padding: 0 3px;
  &::before, &::after { content: ''; width: 7px; height: 7px; border-radius: 50%; background: #2a2a2a; }
  i { width: 2px; height: 9px; background: #222; }
`;
const Glyph = styled.svg`flex: none;`;
const Arrow = ({ d }: { d: string }) => (
  <Glyph width="14" height="14" viewBox="0 0 14 14"><circle cx="7" cy="7" r="7" fill="#0e0e0e" /><path d={d} fill="#aaa" /></Glyph>
);
const Sign = ({ plus }: { plus?: boolean }) => (
  <Glyph width="12" height="12" viewBox="0 0 12 12"><path d={plus ? 'M4.500 1h3v3.500h3.500v3h-3.500v3.500h-3v-3.500h-3.500v-3h3.500z' : 'M.5 4.500h11v3h-11z'} fill="#a2a2a2" /></Glyph>
);

/* ---------- transport ---------- */
const Transport = styled.div`height: 37px; display: flex; align-items: center; padding-left: 5px; border-bottom: 1px solid #4c545a;`;
const Bottom = styled.div`height: 3px; background: linear-gradient(90deg, #16292c, #13283a 20%, #16283a);`;
const Duo = styled.div`
  width: 55px; height: 23px; display: flex; border-radius: 12px; border: 1px solid #505050; background: #2b2b2b; box-shadow: 0 2px 2px #222;
  svg { flex: 1; height: 21px; } svg:first-child { border-right: 1px solid #505050; }
`;
const PlayBtn = styled.div`
  width: 30px; height: 30px; border-radius: 50%; background: linear-gradient(#fff, #aaa 45%, #555); border: 1px solid #222; margin: 0 3px;
`;
const LoopBtn = styled.div`width: 24px; height: 24px; border-radius: 50%; border: 1px solid #505050; background: #2b2b2b; margin-right: 4px;`;
const Clock = styled.div`margin-left: 8px; width: 379px; font-weight: 700; font-size: 22px; line-height: 30px; color: #8b8b8b; letter-spacing: .4px;`;
const PlayState = styled.div`width: 803px; font-size: 14px; color: #949494; letter-spacing: .75px;`;
const SelText = styled.div<{ $w: number }>`width: ${p => p.$w}px; font-size: 12px; color: #9c9c9c; letter-spacing: .1px; white-space: nowrap; padding-top: 2px;`;
const Box = styled.div<{ $w: number }>`
  width: ${p => p.$w}px; height: 36px; background: #2a2a2a; margin-right: 3px; display: flex; flex-direction: column; align-items: center; justify-content: space-around;
  font-size: 11px; line-height: 17px; color: #a0a0a0; letter-spacing: -.1px;
`;
const GlobalLine = styled.div`display: flex; align-items: center; gap: 2px; font-weight: 700; font-size: 8px; color: #8c8c8c; line-height: 14px; letter-spacing: -.2px;`;
const NoneLine = styled.div`
  width: 46px; height: 14px; background: #333; display: flex; align-items: center; justify-content: space-between; padding-left: 5px; font-size: 10px; line-height: 13px; letter-spacing: -.2px;
`;
const RateKnob = styled.div`
  width: 30px; height: 30px; border-radius: 50%; border: 1px solid #505050; background: #2e2e2e; display: flex; justify-content: center; margin: 0 7px 0 2px; flex: none;
  &::after { content: ''; width: 1px; height: 10px; margin-top: 4px; background: #999; }
`;
const Rate = styled.div`font-size: 10.5px; line-height: 17px; color: #8a8a8a; text-align: center; white-space: nowrap; padding-top: 2px; letter-spacing: -.2px;`;

/* ---------- toolbar glyphs ---------- */
const S = (p: { children: React.ReactNode; f?: boolean; w?: number }) => (
  <svg viewBox="0 0 28 28" fill={p.f ? 'currentColor' : 'none'} stroke={p.f ? 'none' : 'currentColor'} strokeWidth={p.w || 1.2}>{p.children}</svg>
);
const TOOLS: [boolean, React.ReactNode][] = [
  [false, <S><path d="M8.500 6.500h7l4 4v11h-11zM15.500 6.500v4h4" /></S>],
  [false, <S><rect x="4.500" y="17.500" width="19" height="5.500" rx="1.500" /><path d="M6 19h2.500v2.500H6zM14 3l4 5h-3v7h-2V8h-3z" fill="currentColor" stroke="none" /></S>],
  [false, <S f><path d="M5.500 17h17a1.500 1.500 0 0 1 1.500 1.500v4a1 1 0 0 1-1 1H5a1 1 0 0 1-1-1v-4a1.500 1.500 0 0 1 1.500-1.500zM6 19v2.500h2.500v-2.500zM14 15l4-5h-3V3h-2v7h-3z" fillRule="evenodd" /></S>],
  [false, <S><circle cx="13.500" cy="14.500" r="9" /><path d="M11 12.500h3v6.500M10.500 19.500h6M13 9.500h1.500" strokeWidth="1.700" /></S>],
  [false, <S f><path d="M3 9v10h9l-3-3c5-3 10-2 15 1-5-7-12-8-18-4z" /></S>],
  [false, <S f><path d="M25 9v10h-9l3-3c-5-3-10-2-15 1 5-7 12-8 18-4z" /></S>],
  [false, <S f><path d="M11 5h6v1.500h-6zM3.500 14C9 6 19 6 24 14l-1 .5C18 8.500 10 8.500 4.500 14.500zM10.500 10.500h2v12.500H6.500zM15.500 10.500h2L21.500 23h-6zM13.300 12h1.400v2h-1.400zM13.300 16h1.400v2h-1.400zM13.300 20h1.400v2h-1.400z" /></S>],
  [true, <S w={1.4}><path d="M3 6.500h6l10 15.500M25 6.500h-6L9 22" /></S>],
  [true, <S w={1.6}><path d="M12 10H8a4 4 0 0 0 0 9h4M16 10h4a4 4 0 0 1 0 9h-4M9 14.500h10" /></S>],
  [false, <S w={1.2}>{[5.5, 12.5, 19.5].map(x => [6.5, 12.5, 18.5].map(y => <rect key={`${x}${y}`} x={x} y={y} width="4" height="3" fill={x === 12.5 && y === 12.5 ? 'currentColor' : 'none'} />))}</S>],
  [true, <S w={1.4}><path d="M9 11l4-5h2l4 5M12 17.500H8.500a3 3 0 0 0 0 6H12M16 17.500h3.500a3 3 0 0 1 0 6H16M10 20.500h8" /><path d="M7.500 9.500h3v3h-3zM12.500 4.500h3v3h-3zM17.500 9.500h3v3h-3z" fill="currentColor" stroke="none" /></S>],
  [true, <S w={1.2}><path d="M6.500 6v17M11.500 6v17M16.500 6v17M21.500 6v17" strokeDasharray="3.500 2" /></S>],
  [true, <S><path d="M10 8h5a6.500 6.500 0 0 1 0 13h-5" strokeWidth="3" /><path d="M6 6.500h2.500v3H6zM6 19.500h2.500v3H6z" fill="currentColor" stroke="none" /></S>],
  [false, <S><path d="M9.500 14v-4a4 4 0 0 1 8 0v4" strokeWidth="2" /><rect x="7" y="14" width="13" height="8" fill="currentColor" /></S>],
];

export default function App() {
  return (
    <>
      <Global />
      <Screen>
        <Main>
          <Side>
            <Toolbar>{TOOLS.map(([on, icon], i) => <Tool key={i} $on={on}>{icon}</Tool>)}</Toolbar>
            <TrackList>
              {TRACKS.map((t, i) => <TrackPanel key={t.n} t={t} first={i === 0} />)}
              <TrackRow><FolderCol /><NumCol $t="sky" /><Body $t="sky" /></TrackRow>
            </TrackList>
            <PanelEdge />
          </Side>
          <Timeline>
            <Ruler />
            <ArrangeRow>
              <Arrange>
                {TRACKS.map((t, i) => (
                  <Lane key={t.n} $first={i === 0} $alt={i % 2 === 1}>
                    {t.parent && <ParentGhost n={t.n} />}
                    {(LANES[t.n] || []).map(it => <ClipView key={it.x} it={it} />)}
                    {t.n === 11 && (
                      <TakeMarker>
                        <svg width="10" height="12" viewBox="0 0 10 12"><path d="M5 0l5 6-5 6-5-6z" fill="#f0e000" /></svg>choca-barrada
                      </TakeMarker>
                    )}
                  </Lane>
                ))}
              </Arrange>
              <VScroll>
                <Arrow d="M3.500 9.500h7L7 4z" />
                <VThumb />
                <Gap $h={276} />
                <Arrow d="M3.500 5h7L7 10.500z" />
                <Gap $h={8} /><Sign plus /><Gap $h={14} /><Sign />
              </VScroll>
            </ArrangeRow>
            <Overlay width="1463" height="904" shapeRendering="crispEdges">
              {Array.from({ length: 110 }, (_, i) => i + 1).map(i => (
                <line key={i} x1={tick(i) + 0.5} x2={tick(i) + 0.5} y1="130" y2="902" stroke="#0c0c0c" strokeDasharray="1 1" />
              ))}
              {EDGES.map(([x, c]) => <rect key={x} x={x - ORIGIN} y="17" width="1" height="887" fill={c} />)}
              {[510, 641, 754].map(x => <rect key={x} x={x - ORIGIN} y="42" width="1" height="88" fill="#a00000" />)}
              <rect x={634 - ORIGIN} y="42" width="1" height="862" fill="#a80000" />
              <rect x={1543 - ORIGIN} y="17" width="1" height="887" fill="#2f9484" />
              <path d="M1098 70h20l-10 10z" fill="#2e7a6c" stroke="#8aa" strokeWidth=".7" />
            </Overlay>
          </Timeline>
        </Main>
        <StatusRow>
          <Status>Select time</Status>
          <HScroll>
            <Arrow d="M9 3.500v7L4 7z" />
            <HThumb><i /></HThumb>
            <Arrow d="M5 3.500v7L10 7z" />
            <Gap $w={8} /><Sign plus /><Gap $w={14} /><Sign />
          </HScroll>
        </StatusRow>
        <Transport>
          <Duo>
            <svg viewBox="0 0 27 21" fill="#aaa"><path d="M9 6h2v9H9zM19 6v9l-8-4.500z" /></svg>
            <svg viewBox="0 0 27 21" fill="#aaa"><path d="M16 6h2v9h-2zM8 6v9l8-4.500z" /></svg>
          </Duo>
          <Gap $w={3} />
          <Arm $d={30} />
          <PlayBtn><svg width="28" height="28" viewBox="0 0 28 28"><path d="M9.500 8v12l11-6z" fill="#333" /></svg></PlayBtn>
          <LoopBtn><svg width="22" height="22" viewBox="0 0 22 22" fill="none" stroke="#aaa" strokeWidth="2"><path d="M9 15.800a5.200 5.200 0 0 1-1-9M13 6.200a5.200 5.200 0 0 1 1 9" /><path d="M5.500 5h5v4.500zM16.500 17h-5v-4.500z" fill="#aaa" stroke="none" /></svg></LoopBtn>
          <Duo>
            <svg viewBox="0 0 27 21" fill="#aaa"><path d="M9 6h9v9H9z" /></svg>
            <svg viewBox="0 0 27 21" fill="#aaa"><path d="M8 6h3v9H8zM14 6h3v9h-3z" /></svg>
          </Duo>
          <Clock>22:16.000</Clock>
          <PlayState>[Stopped]</PlayState>
          <SelText $w={70}>Selection:</SelText>
          <SelText $w={80}>3:40.000</SelText>
          <SelText $w={80}>5:16.000</SelText>
          <SelText $w={66}>1:36.000</SelText>
          <Box $w={50}><span>BPM</span><span>60</span></Box>
          <Box $w={38}>1/4</Box>
          <Box $w={54}>
            <GlobalLine><EnvIcon c="#6c6c6c" />GLOBAL</GlobalLine>
            <NoneLine>none<svg width="12" height="12" viewBox="0 0 12 12"><circle cx="6" cy="6" r="5.500" fill="#a0a0a0" /><path d="M3.500 4.500h5L6 8.500z" fill="#222" /></svg></NoneLine>
          </Box>
          <RateKnob />
          <Rate>Rate:<br />1.0</Rate>
        </Transport>
        <Bottom />
      </Screen>
    </>
  );
}
